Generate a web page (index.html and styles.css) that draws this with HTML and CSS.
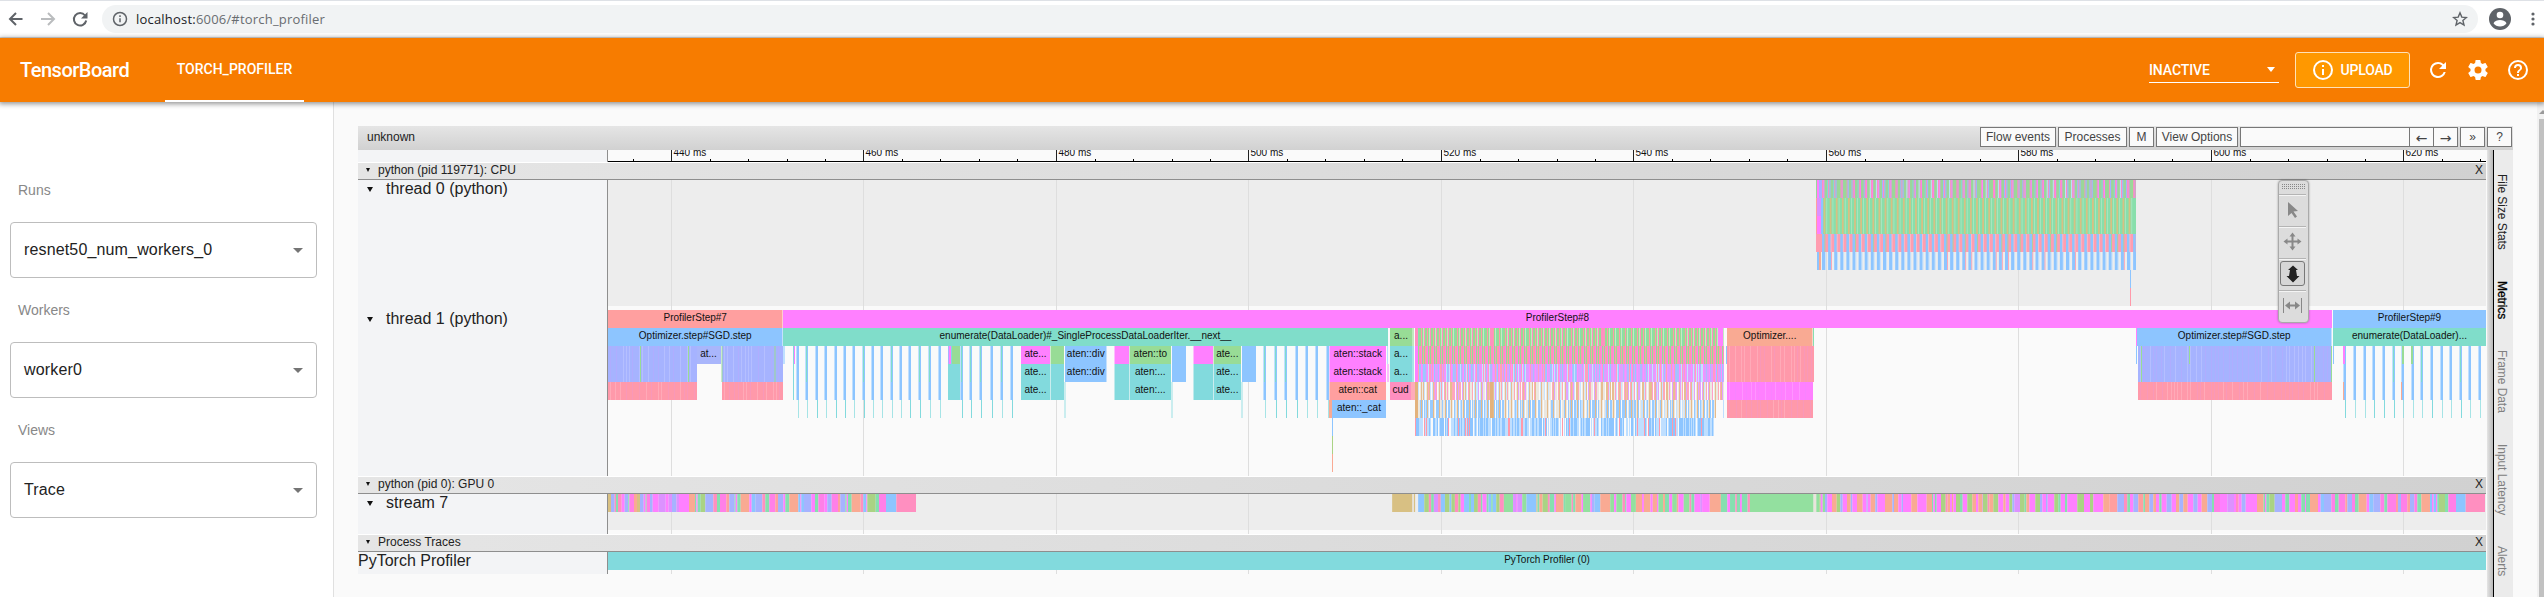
FILE: index.html
```html
<!DOCTYPE html>
<html lang="en">
<head>
<meta charset="utf-8">
<title>TensorBoard</title>
<link rel="stylesheet" href="styles.css">
</head>
<body>
<div class="browser">
  <svg class="nav" width="96" height="36" viewBox="0 0 96 36" fill="none" stroke-width="2">
    <path d="M22.500 18H10.500M16 12l-6 6 6 6" stroke="#5f6368"/>
    <path d="M41 18h13M48 12l6 6-6 6" stroke="#babcbe"/>
    <path d="M85 14.500A6.200 6.200 0 1 0 86.200 19.500" stroke="#5f6368"/>
    <path d="M87.500 11v6.500H81z" fill="#5f6368"/>
  </svg>
  <div class="omnibox">
    <svg width="16" height="16" viewBox="0 0 16 16" fill="none" stroke="#5f6368" stroke-width="1.500"><circle cx="8" cy="8" r="6.500"/><path d="M8 7.300v4M8 4.300v1.600"/></svg>
    <span class="url"><b>localhost:</b>6006/#torch_profiler</span>
    <svg class="star" width="16" height="16" viewBox="0 0 16 16" fill="none" stroke="#5f6368" stroke-width="1.400"><path d="M8 1.800l1.800 4.300 4.600.4-3.500 3 1.100 4.600L8 11.600l-4 2.500 1.100-4.600-3.500-3 4.600-.4z"/></svg>
  </div>
  <svg class="user" width="22" height="22" viewBox="0 0 22 22"><circle cx="11" cy="11" r="11" fill="#5f6368"/><circle cx="11" cy="7" r="3.300" fill="#fff"/><path d="M4.500 15.300c1-2.500 4-3.300 6.500-3.300s5.500.8 6.500 3.300c-1.600 2.200-3.800 3.200-6.500 3.200s-4.900-1-6.500-3.200z" fill="#fff"/></svg>
  <svg width="6" height="16" viewBox="0 0 6 16" fill="#5f6368"><circle cx="3" cy="3" r="1.600"/><circle cx="3" cy="8" r="1.600"/><circle cx="3" cy="13" r="1.600"/></svg>
</div>
<header class="appbar">
  <div class="brand">TensorBoard</div>
  <div class="tab">TORCH_PROFILER</div>
  <div class="inactive"><span>INACTIVE</span><i class="caret"></i></div>
  <div class="upload">
    <svg width="20" height="20" viewBox="0 0 20 20" fill="none" stroke="#fff" stroke-width="2"><circle cx="10" cy="10" r="9"/><path d="M10 9v6M10 5v2"/></svg>
    <span>UPLOAD</span>
  </div>
  <svg class="act" width="24" height="24" viewBox="0 0 24 24" fill="#fff"><path d="M17.650 6.350A7.958 7.958 0 0 0 12 4a8 8 0 1 0 7.730 10h-2.080A6 6 0 1 1 12 6c1.660 0 3.140.69 4.220 1.780L13 11h7V4z"/></svg>
  <svg class="act" width="24" height="24" viewBox="0 0 24 24" fill="#fff"><path d="M19.430 12.980c.04-.32.07-.64.07-.98s-.03-.66-.07-.98l2.110-1.650c.19-.15.24-.42.12-.64l-2-3.460c-.12-.22-.39-.3-.61-.22l-2.490 1c-.52-.4-1.080-.73-1.690-.98l-.38-2.650A.488.488 0 0 0 14 2h-4c-.25 0-.46.18-.49.42l-.38 2.650c-.61.25-1.170.59-1.690.98l-2.490-1c-.23-.09-.49 0-.61.22l-2 3.460c-.13.22-.07.49.12.64l2.110 1.650c-.04.32-.07.65-.07.98s.03.66.07.98l-2.110 1.650c-.19.15-.24.42-.12.64l2 3.460c.12.22.39.3.61.22l2.490-1c.52.4 1.080.73 1.690.98l.38 2.650c.03.24.24.42.49.42h4c.25 0 .46-.18.49-.42l.38-2.650c.61-.25 1.170-.59 1.690-.98l2.490 1c.23.09.49 0 .61-.22l2-3.460c.12-.22.07-.49-.12-.64zM12 15.500A3.500 3.500 0 1 1 12 8.500a3.500 3.500 0 0 1 0 7z"/></svg>
  <svg class="act" width="24" height="24" viewBox="0 0 24 24" fill="#fff"><path d="M11 18h2v-2h-2zm1-16a10 10 0 1 0 0 20 10 10 0 0 0 0-20zm0 18a8 8 0 1 1 0-16 8 8 0 0 1 0 16zm0-14a4 4 0 0 0-4 4h2c0-1.100.9-2 2-2s2 .9 2 2c0 2-3 1.750-3 5h2c0-2.250 3-2.500 3-5a4 4 0 0 0-4-4z"/></svg>
</header>
<div class="content">
  <aside class="side">
    <label>Runs</label><div class="select"><span>resnet50_num_workers_0</span><i class="caret"></i></div>
    <label>Workers</label><div class="select"><span>worker0</span><i class="caret"></i></div>
    <label>Views</label><div class="select"><span>Trace</span><i class="caret"></i></div>
  </aside>
  <main class="main">
    <div class="viewer">
      <div class="toolbar">
        <span class="title">unknown</span>
        <div class="btn flow">Flow events</div>
        <div class="btn proc">Processes</div>
        <div class="btn meta">M</div>
        <div class="btn view">View Options</div>
        <div class="find"><div class="field"></div><div class="arrow">←</div><div class="arrow">→</div></div>
        <div class="btn sm">»</div>
        <div class="btn sm">?</div>
      </div>
      <div class="body">
        <div class="tracks">
          <div class="row"><div class="name"></div><svg id="ruler" width="1878" height="12" viewBox="608 0 1878 12"></svg></div>
          <div class="head"><i class="tri"></i><span>python (pid 119771): CPU</span><b>X</b></div>
          <div class="row"><div class="name"><i class="tri"></i>thread 0 (python)</div><svg id="cpu0" width="1878" height="130" viewBox="608 0 1878 130"></svg></div>
          <div class="row"><div class="name"><i class="tri"></i>thread 1 (python)</div><svg id="cpu1" width="1878" height="166" viewBox="608 0 1878 166"></svg></div>
          <div class="head"><i class="tri"></i><span>python (pid 0): GPU 0</span><b>X</b></div>
          <div class="row"><div class="name"><i class="tri"></i>stream 7</div><svg id="gpu" width="1878" height="40" viewBox="608 0 1878 40"></svg></div>
          <div class="head"><i class="tri"></i><span>Process Traces</span><b>X</b></div>
          <div class="row"><div class="name plain">PyTorch Profiler</div><svg id="proc" width="1878" height="22" viewBox="608 0 1878 22"></svg></div>
          <svg class="modes" width="31" height="143" viewBox="0 0 31 143">
            <defs><pattern id="dots" width="2" height="2" patternUnits="userSpaceOnUse"><rect width="1" height="1" fill="#888"/></pattern></defs>
            <rect x=".5" y=".5" width="30" height="142" rx="3.500" fill="#dcdcdc" stroke="#aaa"/>
            <rect x="3" y="4" width="24" height="6" fill="url(#dots)"/>
            <path d="M1 14.500h27M1 46.500h27M1 78.500h27M1 110.500h27" stroke="#b4b4b4"/>
            <path d="M1 15.500h27M1 47.500h27M1 79.500h27M1 111.500h27" stroke="#f4f4f4"/>
            <path d="M10 22v14l3.500-3 3.500 5 2-1.500-3.500-5 4.500-.5z" fill="#888"/>
            <path d="M14.500 52.500l3 4h-2v4h4v-2l4 3-4 3v-2h-4v4h2l-3 4-3-4h2v-4h-4v2l-4-3 4-3v2h4v-4h-2z" fill="#888"/>
            <rect x="2.500" y="81.500" width="24" height="24" rx="2.500" fill="#d6d6d6" stroke="#777"/>
            <path d="M15 85.500l5 4.500h-2l1 6h2.500L15 102.500 8.500 96H11l1-6h-2z" fill="#222"/>
            <path d="M5.500 118v15M23.500 118v15" stroke="#888"/>
            <path d="M7 125.500l5-4v3h5v-3l5 4-5 4v-3h-5v3z" fill="#888"/>
          </svg>
        </div>
        <div class="splitter"></div>
        <div class="vtabs"><span>File Size Stats</span><span class="on">Metrics</span><span class="off">Frame Data</span><span class="off">Input Latency</span><span class="off">Alerts</span></div>
      </div>
    </div>
    <div class="scroll"><i></i><div class="thumb"></div></div>
  </main>
</div>
<script src="trace.js"></script>
</body>
</html>
```
FILE: styles.css
```css
* { box-sizing: border-box; }
body { margin: 0; width: 2544px; height: 597px; overflow: hidden; font-family: "Liberation Sans", Arial, sans-serif; color: #222; background: #fafafa; }
svg { display: block; flex: none; }
.browser { height: 38px; display: flex; align-items: center; background: #fff; border-top: 1px solid #dee1e6; border-bottom: 1px solid #dcdcdc; }
.nav { margin-right: 6px; }
.omnibox { width: 2376px; height: 28px; border-radius: 14px; background: #f1f3f4; display: flex; align-items: center; padding: 0 10px; }
.url { font: 13px/18px "Open Sans", sans-serif; color: #696d71; margin-left: 8px; letter-spacing: .2px; }
.url b { font-weight: 400; color: #202124; }
.star { margin-left: auto; }
.user { margin: 0 19px 0 11px; }
.appbar { position: relative; z-index: 2; height: 64px; display: flex; align-items: center; background: #f77c00; color: #fff; font-family: Roboto, sans-serif; font-weight: 500; font-size: 14px; box-shadow: 0 1px 5px 1px rgba(0,0,0,.42); }
.appbar > * { flex: none; }
.brand { font-size: 20px; width: 165px; padding-left: 20px; letter-spacing: -.5px; }
.tab { width: 139px; height: 64px; line-height: 62px; text-align: center; border-bottom: 2px solid #fff; }
.inactive { margin-left: 1845px; width: 130px; height: 26px; border-bottom: 1px solid #fff; display: flex; align-items: center; justify-content: space-between; padding: 0 4px 0 0; letter-spacing: -.1px; }
.caret { border: 4.500px solid transparent; border-top: 5px solid currentColor; border-bottom: 0; }
.upload { margin: 0 16px; width: 115px; height: 36px; border: 1px solid #ffe2b8; border-radius: 3px; background: #ff9800; display: flex; align-items: center; justify-content: center; gap: 8px; letter-spacing: -.2px; }
.act { margin-right: 16px; }
.act:last-child { margin-right: 0; }
.content { display: flex; height: 495px; }
.side { width: 334px; background: #fff; border-right: 1px solid #e0e0e0; padding: 65px 16px 0 10px; }
.side label { display: block; height: 55px; line-height: 46px; padding-left: 8px; font-size: 14px; color: #888; }
.select { height: 56px; border: 1px solid #bdbdbd; border-radius: 4px; display: flex; align-items: center; justify-content: space-between; padding: 0 13px; font-size: 16px; letter-spacing: .15px; margin-bottom: 9px; }
.select .caret { color: #757575; border-width: 5px 5px 0; }
.main { flex: 1; display: flex; justify-content: space-between; padding: 0 0 0 24px; }
.viewer { width: 2155px; padding-top: 24px; display: flex; flex-direction: column; }
.toolbar { height: 24px; display: flex; align-items: flex-start; background: linear-gradient(#e5e5e5, #d1d1d1); padding: 1px 1px 0 9px; font-size: 12px; gap: 2px; }
.title { margin-right: auto; line-height: 20px; }
.btn, .find { height: 20px; border: 1px solid #777; background: #fafafa; line-height: 18px; text-align: center; color: #444; }
.flow { width: 76px; }
.proc { width: 69px; }
.meta { width: 25px; }
.view { width: 82px; }
.find { width: 218px; display: flex; }
.field { flex: 1; }
.arrow { width: 24px; border-left: 1px solid #777; font: 14px/20px "DejaVu Sans", sans-serif; }
.sm { width: 25px; }
.body { flex: 1; display: flex; }
.tracks { position: relative; width: 2128px; }
.row { display: flex; }
.name { width: 250px; border-right: 1px solid #8e8e8e; background: #f3f4f6; font-size: 16px; line-height: 18px; display: flex; padding-left: 8px; }
.name.plain { padding-left: 0; }
.tri { width: 6px; height: 5px; margin: 7px 13px 0 1px; background: #111; clip-path: polygon(0 0, 100% 0, 50% 100%); }
.head { height: 18px; border-top: 1px solid #fff; border-bottom: 1px solid #8e8e8e; background: linear-gradient(to right, #e5e5e5, #d1d1d1); display: flex; font-size: 12px; line-height: 14px; padding: 0 3px 0 8px; }
.head .tri { width: 4px; height: 4px; margin: 5px 8px 0 0; }
.head b { margin-left: auto; font-weight: 400; line-height: 15px; }
.modes { position: absolute; left: 1920px; top: 30px; filter: drop-shadow(0 0 1px rgba(0,0,0,.3)); }
.splitter { width: 8px; border-right: 1px solid #000; background: linear-gradient(to right, #fafafa 1px, #e5e5e5 1px, #b8b8b8); }
.vtabs { width: 19px; background: #ebebeb; writing-mode: vertical-rl; display: flex; gap: 31px; padding: 24px 3px 0 0; font-size: 12px; line-height: 17px; letter-spacing: -.06px; white-space: nowrap; overflow: hidden; }
.vtabs .on { color: #000; -webkit-text-stroke: .3px #000; }
.vtabs .off { color: #808080; }
.scroll { width: 7px; background: #f1f1f1; padding: 8px 0 0 2px; overflow: hidden; }
.scroll i { display: block; width: 8px; height: 4px; background: #9a9a9a; clip-path: polygon(50% 0, 100% 100%, 0 100%); }
.thumb { height: 480px; margin-top: 5px; background: #c1c1c1; }
svg text { font: 10px "Liberation Sans", Arial, sans-serif; fill: #111; }
```
FILE: trace.js
```js
const NS = 'http://www.w3.org/2000/svg';
const C = {
  o: '#f9aa93', b: '#a6b3ff', B: '#8dc5ff', p: '#ff8fc0', m: '#ff80ff', M: '#ff80e8', v: '#dc92ff',
  g: '#86dfb0', G: '#93e09f', O: '#aad384', s: '#ff9f9f', t: '#d8c083', r: '#ff99aa', c: '#82dadd',
  e: '#80ddca', n: '#98dc96', w: '#e9e4dc', k: '#e3b27c', l: '#bfdfff'
};
let seed = 7;
const rnd = () => (seed = (seed * 16807) % 2147483647) / 2147483647;
const pick = s => s[Math.floor(rnd() * s.length)];

function add(svg, tag, attrs, text) {
  const el = document.createElementNS(NS, tag);
  for (const k in attrs) el.setAttribute(k, attrs[k]);
  if (text) el.textContent = text;
  svg.appendChild(el);
}
function bar(svg, x1, x2, row, color, label, rows = 1, opacity = 1) {
  add(svg, 'rect', { x: x1, y: row * 18, width: x2 - x1, height: rows * 18, fill: C[color] || color, opacity });
  if (label) add(svg, 'text', { x: (x1 + x2) / 2, y: row * 18 + 10.6, 'text-anchor': 'middle' }, label);
}
const grid = k => 671 + Math.round(k * 192.45);
function lines(svg, h) {
  for (let k = 0; k < 10; k++) add(svg, 'rect', { x: grid(k), y: 0, width: 1, height: h, fill: '#dedede' });
}
const $ = id => document.getElementById(id);

/* time ruler */
const ruler = $('ruler');
for (let k = -1; k < 10; k++) {
  const x = grid(k);
  for (let i = 1; i < 5; i++) add(ruler, 'rect', { x: Math.round(x + i * 38.5), y: 9, width: 1, height: 3, fill: '#000' });
  if (k < 0) continue;
  add(ruler, 'rect', { x, y: 0, width: 1, height: 12, fill: '#222' });
  add(ruler, 'text', { x: x + 2.5, y: 6 }, 440 + k * 20 + ' ms');
}
add(ruler, 'rect', { x: 608, y: 11, width: 1878, height: 1, fill: '#000' });

/* CPU thread 0 */
const t0 = $('cpu0');
add(t0, 'rect', { x: 608, y: 0, width: 1878, height: 126, fill: '#ededed' });
lines(t0, 130);
bar(t0, 1816, 2136, 0, '#9bd69a');
bar(t0, 1817, 2136, 1, '#88dfab', '', 2);
bar(t0, 1816, 2136, 3, '#ff9db0');
for (let x = 1822; x < 2135; x += 6.1) {
  bar(t0, x, x + 1.2, 0, 'p'); bar(t0, x + 1.2, Math.min(x + 2.4, 2136), 0, pick('mvmbM'));
  bar(t0, x - 1, x, 0, pick('nlcb'));
  if (x < 2131) { bar(t0, x + 1.6, x + 3.4, 1, 't', '', 2); bar(t0, x + 4.6, x + 5.1, 1, '#c4ecd0', '', 2); }
  bar(t0, x, Math.min(x + 2.6, 2136), 3, 'B');
  if (x < 2131) bar(t0, x + 2.6, x + 3.3, 3, rnd() < .3 ? 'n' : '#f9c4cf');
  bar(t0, x, Math.min(x + 3, 2136), 4, 'B');
  if (x < 2131) bar(t0, x + 3, x + 3.8, 4, pick('lllr'));
}
bar(t0, 1817, 1819, 0, 'm'); bar(t0, 1819, 1822, 0, 'b'); bar(t0, 1817, 1821, 1, 'v'); bar(t0, 1817, 1821, 2, 'm');
bar(t0, 1821, 1823, 1, 'B', '', 2); bar(t0, 1816, 1817, 1, 's', '', 2);
bar(t0, 1817, 1819, 4, 'B'); bar(t0, 1819, 1821, 4, 'o');
bar(t0, 2130, 2131, 5, 'B'); bar(t0, 2130, 2131, 6, 'r');

/* CPU thread 1 */
const t1 = $('cpu1');
lines(t1, 166);
bar(t1, 608, 782.500, 0, 's', 'ProfilerStep#7');
bar(t1, 783, 2332, 0, 'm', 'ProfilerStep#8');
bar(t1, 2333, 2486, 0, 'B', 'ProfilerStep#9');
bar(t1, 608, 782.500, 1, 'B', 'Optimizer.step#SGD.step');
bar(t1, 783, 1388, 1, 'e', 'enumerate(DataLoader)#_SingleProcessDataLoaderIter.__next__');
bar(t1, 2137, 2331.500, 1, 'B', 'Optimizer.step#SGD.step');
bar(t1, 2333, 2486, 1, 'e', 'enumerate(DataLoader)...');
function striped(x1, x2, row, rows, color) {
  bar(t1, x1, x2, row, color, '', rows);
  for (let x = x1 + 2; x < x2 - 1; x += 3 + Math.floor(rnd() * 5)) bar(t1, x, x + 1, row, rnd() < .6 ? '#fff' : 'v', '', rows, .17);
}
striped(608, 697, 2, 2, 'b'); bar(t1, 697, 721, 2, '#a9b6fb'); add(t1, 'text', { x: 708.5, y: 46.6, 'text-anchor': 'middle' }, 'at...');
striped(722, 783, 2, 2, 'b'); striped(608, 697, 4, 1, 'r'); striped(722, 783, 4, 1, 'r');
[640, 721.5, 774.5].forEach(x => bar(t1, x, x + 1, 2, 'n', '', 2));
bar(t1, 688, 689, 2, 'n', '', 2); bar(t1, 783, 785, 2, 'l');
striped(2138, 2332, 2, 2, 'b'); striped(2138, 2332, 4, 1, 'r');
[2141, 2314, 2331].forEach(x => bar(t1, x, x + 1, 2, 'n', '', 2));
bar(t1, 2189, 2190, 2, 'n'); bar(t1, 2136, 2137, 1, 'm'); bar(t1, 2136, 2137, 2, 'B'); bar(t1, 2333, 2334, 2, 'B');
function spike(x) {
  bar(t1, x, x + 1, 2, 'l', '', 3); bar(t1, x + 1, x + 3, 2, 'B', '', 3);
  if (rnd() < .4) bar(t1, x + 1, x + 2, 2, 'e', '', 2);
  bar(t1, x + 2, x + 3, 5, 'c', '', 1, rnd() < .5 ? 1 : .7);
}
[619, 646, 675, 703, 732, 760, 788, 816, 844, 872, 900, 928, 956, 986, 1014, 1044, 1111, 1138, 1168, 1200, 1231, 1262]
  .forEach(z => spike(Math.round(589.5 + z / 3)));
[550, 583, 613, 645, 676, 707, 738].forEach(z => spike(Math.round(1079.5 + z / 3)));
[430, 459, 490, 518, 547, 576, 605, 633, 662, 691, 720, 749, 777, 806, 834].forEach(z => spike(Math.round(2199.5 + z / 3)));
bar(t1, 793, 794, 2, 'c', '', 3); bar(t1, 794, 795, 2, 'm'); bar(t1, 2343, 2345, 2, 'm');
bar(t1, 2343, 2344, 4, 'o'); bar(t1, 2401, 2402, 4, 'o'); bar(t1, 2402, 2404, 2, 'n'); bar(t1, 2411, 2413, 2, 'n');
bar(t1, 948, 960, 2, 'c', '', 3); bar(t1, 948, 949, 2, 'b'); bar(t1, 949, 951, 2, 'm'); bar(t1, 952, 960, 2, 'n');
function group(a, b, c, d, l1, l2, l3, blue) {
  bar(t1, a, b, 2, 'm', l1); bar(t1, b + .6, c, 2, 'n', l2);
  for (const r of [3, 4]) { bar(t1, a, b, r, 'c', l1 && l3); bar(t1, b + .6, c, r, 'c', l1 ? '' : l3); }
  bar(t1, c + 1, d, 2, 'B', blue); bar(t1, c + 1, d, 3, 'B', blue); bar(t1, c + .5, c + 1.5, 4, 'c', '', 2, .8);
}
group(1021, 1050, 1064, 1106.5, 'ate...', '', 'ate...', 'aten::div');
group(1114.5, 1129, 1171, 1186, '', 'aten::to', 'aten:...', '');
group(1193.5, 1213, 1241, 1256, '', 'ate...', 'ate...', '');
bar(t1, 1329.5, 1386, 2, 'm', 'aten::stack'); bar(t1, 1329.5, 1386, 3, 'm', 'aten::stack');
bar(t1, 1329.5, 1386, 4, 's', 'aten::cat'); bar(t1, 1329, 1332, 5, 'o'); bar(t1, 1332, 1386, 5, 'B', 'aten::_cat');
bar(t1, 1332, 1333, 6, 'B'); bar(t1, 1332, 1333, 7, 'O'); bar(t1, 1332, 1333, 8, 'o');
bar(t1, 1387, 1388, 2, 'l'); bar(t1, 1387, 1389, 3, 'm', '', 1, .5);
bar(t1, 1390, 1412, 1, 'n', 'a...'); bar(t1, 1412, 1414, 1, 'n', '', 1, .6);
bar(t1, 1390, 1412, 2, 'c', 'a...'); bar(t1, 1390, 1412, 3, 'c', 'a...'); bar(t1, 1412, 1414, 2, 'c', '', 2, .7);
bar(t1, 1390, 1411, 4, 'p', 'cud'); bar(t1, 1411, 1415, 4, 'r', '', 1, .8);
/* forward pass: rows of very short operators */
for (let x = 1415; x < 1724; x++) {
  const i = (x - 1415) % 6;
  bar(t1, x, x + 1, 1, i === 0 ? 'r' : i === 3 ? pick('ppg') : i === 2 ? '#c4ebc2' : 'n');
  bar(t1, x, x + 1, 2, i === 0 ? 'M' : i === 3 || i === 1 ? 'n' : pick('pprr'));
  bar(t1, x, x + 1, 3, i === 0 ? 'm' : pick('bvrBpvvl'), '', 1, .9);
  if (i !== 4) bar(t1, x, x + 1, 4, i === 0 ? 'k' : pick('rvwpwlkw'), '', 1, .85);
  if (x < 1716) {
    if (i !== 2) bar(t1, x, x + 1, 5, i === 0 ? 'k' : pick('BlwBBw'), '', 1, .9);
    if (rnd() < .87) bar(t1, x, x + 1, 6, rnd() < .05 ? 'r' : pick('BlBl'));
  }
}
bar(t1, 1415, 1418, 1, 'p'); bar(t1, 1415, 1418, 2, 'm', '', 2);
[1415, 1490].forEach(x => bar(t1, x, x + 3, 4, 'k', '', 2)); bar(t1, 1490, 1493, 1, 'p'); bar(t1, 1601, 1604, 1, 'p');
bar(t1, 1718, 1723, 1, 'm'); bar(t1, 1723, 1724, 5, 'l');
bar(t1, 1726, 1727, 2, 'B'); bar(t1, 1727, 1812.5, 1, 'o', 'Optimizer....'); bar(t1, 1813, 1814, 1, 'g');
striped(1727, 1814, 2, 2, 'r'); striped(1727, 1813, 4, 1, 'm'); striped(1727, 1813, 5, 1, 'r');

/* GPU stream: each token is a colour key and the slice's right edge */
const gpu = $('gpu');
add(gpu, 'rect', { x: 608, y: 0, width: 1878, height: 36, fill: '#ededed' });
lines(gpu, 40);
function stream(origin, scale, start, data) {
  let a = start;
  for (const token of data.split(' ')) {
    const z = +token.slice(1);
    if (token[0] !== '.') bar(gpu, origin + a / scale, origin + z / scale, 0, token[0]);
    a = z;
  }
}
stream(590, 3, 54, 't63 b74 p78 g84 p95 m104 b115 g118 M132 o141 t150 b161 m167 g170 M180 b188 m206 v227 m236 v246 b259 v267 m297 o315 g319 m323 g332 O346 b370 p381 g390 M409 s418 b434 g437 m442 g452 o478 m485 B496 b517 p526 g538 M556 s564 b580 m586 g598 o625 B631 m634 B642 b664 m675 g685 M703 m712 b725 M744 s751 b766 g770 m774 g785 o812 p820 B829 m832 O857 g867 M888 B919 p978');
stream(1360, 2.6133, 84, 't137 w141 t144 .152 B168 O180 p186 g193 v204 p211 B222 O234 B239 O248 p257 O263 m272 B285 g290 B298 O308 p316 g320 m331 g336 B343 g347 B356 O365 p376 G400 v408 m411 v424 G435 B461 t464 g469 o477 O491 p496 g508 m512 o532 g536 G553 p557 g563 o579 m583 G602 m606 b613 B628 o654 G664 m670 G686 p693 g696 m703 m708 G721 o737 m742 o759 m765 o776 m780 G792 o797 g808 m816 G828 o832 m846 G861 p866 g874 m889 v894 m914 o943 g960 m967 g981 p985 g993 m998 g1013 p1019 G1185');
stream(1720, 3, 281, 'w289 G298 O302 m308 G315 b322 m336 o350 O361 b368 m381 o392 b397 m411 o428 m440 b443 m452 o466 b472 m495 o517 b522 o535 m545 b549 m574 o592 m620 o636 g640 m645 g650 m663 O677 p683 o690 m696 o700 m708 O720 g728 m742 O757 o768 m775 o786 m788 O803 p808 o820 O835 m850 o857 m868 O877 b883 v900 O914 g919 o928 m946 O960 b967 m978 b983 m1003 O1015 g1022 m1035 g1042 m1072 O1092 m1110 O1120 m1150 o1168 s1192 b1212 p1222 g1230 m1240 b1255 s1270 g1275 o1288 b1300 o1308 m1318 g1325 m1340 b1355 m1368 o1378 b1390 o1403 m1420 b1433 m1445 o1462 b1476 g1482 M1500');
stream(2200, 3, 60, 'm82 v102 m108 p116 m125 b137 m171 o191 g195 m199 g208 O224 b246 m256 g268 m285 s294 m304 g315 m318 g330 o354 m362 B372 b394 M405 g416 M436 s442 b456 M465 g476 o500 m508 B520 b541 M553 g562 M588 s594 b603 M622 s630 b643 M652 g664 o690 B696 m701 B708 m712 g717 O735 g745 M768 B797 p855');

/* process traces */
const proc = $('proc');
lines(proc, 22);
bar(proc, 608, 2486, 0, 'c', 'PyTorch Profiler (0)');
```
